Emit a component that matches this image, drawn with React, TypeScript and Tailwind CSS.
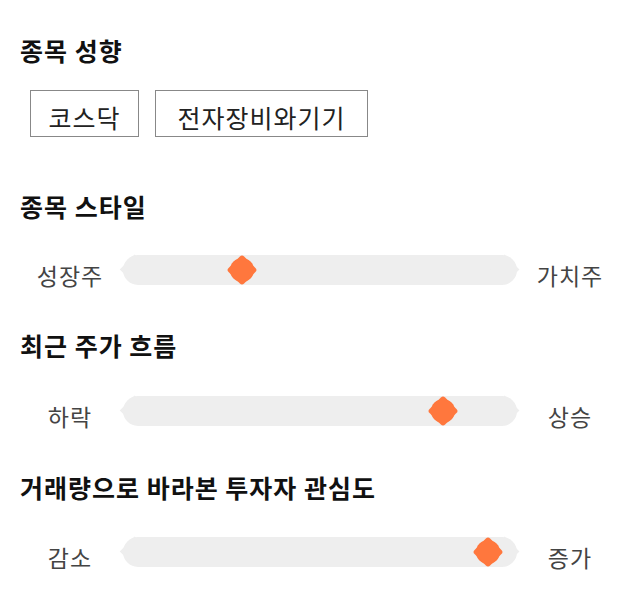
import React from "react";

function Track({ center }: { center: number }) {
  return (
    <div className="relative mx-[3px] h-[30px] w-[394px] shrink-0 rounded-full bg-[#EEEEEE] before:absolute before:left-[1.4px] before:top-[4.4px] before:h-[21.2px] before:w-[21.2px] before:rotate-45 before:bg-[#EEEEEE] before:content-[''] after:absolute after:right-[1.4px] after:top-[4.4px] after:h-[21.2px] after:w-[21.2px] after:rotate-45 after:bg-[#EEEEEE] after:content-['']">
      <div
        className="absolute top-0 z-10 -ml-[15px] flex h-[30px] w-[30px] items-center justify-center"
        style={{ left: center - 3 }}
      >
        <div className="relative h-[24px] w-[24px] rounded-full bg-[#FF773D] before:absolute before:left-[1px] before:top-[1px] before:h-[22px] before:w-[22px] before:rotate-45 before:rounded-[3px] before:bg-[#FF773D] before:content-['']" />
      </div>
    </div>
  );
}

function SliderRow({
  left,
  right,
  center,
  className,
}: {
  left: string;
  right: string;
  center: number;
  className: string;
}) {
  return (
    <div className={"flex items-start " + className}>
      <div className="mt-[5px] w-[100px] shrink-0 text-center text-[23px] leading-[30px] tracking-[1px] text-[#444]">
        {left}
      </div>
      <Track center={center} />
      <div className="mt-[5px] w-[100px] shrink-0 text-center text-[23px] leading-[30px] tracking-[1px] text-[#444]">
        {right}
      </div>
    </div>
  );
}

const title = "text-[25px] font-bold leading-[32px] tracking-[1px] text-[#111]";
const chip =
  "flex h-[47px] items-center justify-center border border-[#888] pt-[8px] text-[25px] leading-none tracking-[1px] text-[#222]";

export default function App() {
  return (
    <div className="h-[606px] w-[640px] overflow-hidden bg-white px-5 pt-[34px] font-['Noto_Sans_CJK_KR','Noto_Sans',sans-serif]">
      <h2 className={title}>종목 성향</h2>
      <div className="mt-[24px] flex gap-4 pl-[10px]">
        <div className={chip + " w-[109px]"}>코스닥</div>
        <div className={chip + " w-[213px]"}>전자장비와기기</div>
      </div>

      <h2 className={"mt-[53px] " + title}>종목 스타일</h2>
      <SliderRow className="mt-[33px]" left="성장주" right="가치주" center={122} />

      <h2 className={"mt-[39px] " + title}>최근 주가 흐름</h2>
      <SliderRow className="mt-[35px]" left="하락" right="상승" center={323} />

      <h2 className={"mt-[40px] " + title}>거래량으로 바라본 투자자 관심도</h2>
      <SliderRow className="mt-[34px]" left="감소" right="증가" center={368} />
    </div>
  );
}
